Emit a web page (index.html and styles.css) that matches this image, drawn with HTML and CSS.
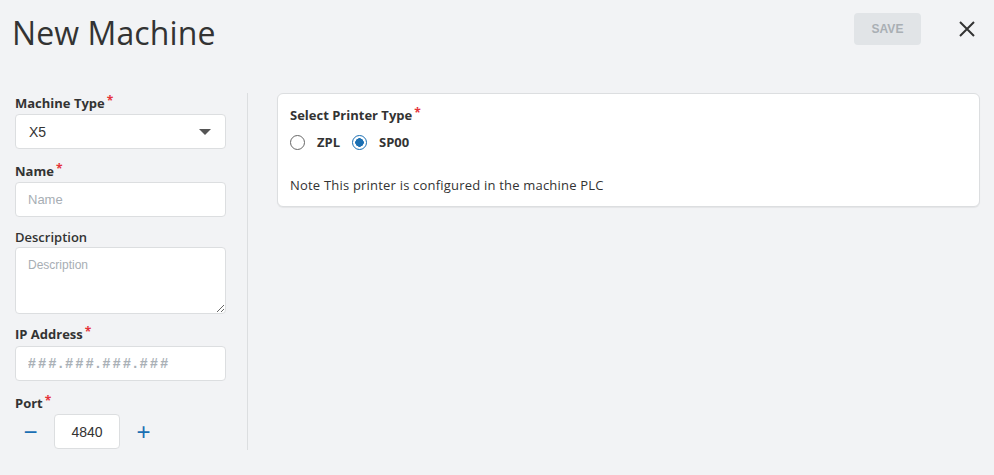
FILE: index.html
```html
<!DOCTYPE html>
<html lang="en">
<head>
  <meta charset="UTF-8" />
  <title>New Machine</title>
  <link rel="stylesheet" href="styles.css">
</head>
<body>
  <header class="top">
    <h1>New Machine</h1>
    <div class="actions">
      <button class="btn-save" disabled>SAVE</button>
      <button class="btn-close" aria-label="Close">
        <svg width="18" height="18" viewBox="0 0 18 18"><path d="M2 2L16 16M16 2L2 16" stroke="#333" stroke-width="2" fill="none"/></svg>
      </button>
    </div>
  </header>

  <div class="content">
    <div class="form-col">
      <label class="field-label">Machine Type<span class="req">*</span></label>
      <div class="select">
        <span>X5</span>
        <span class="caret"></span>
      </div>

      <label class="field-label">Name<span class="req">*</span></label>
      <input class="input" type="text" placeholder="Name">

      <label class="field-label label-tight">Description</label>
      <textarea class="input textarea" placeholder="Description"></textarea>

      <label class="field-label label-loose">IP Address<span class="req">*</span></label>
      <input class="input ip" type="text" placeholder="###.###.###.###">

      <label class="field-label">Port<span class="req">*</span></label>
      <div class="stepper">
        <button class="step-btn">&minus;</button>
        <input class="input port" type="text" value="4840">
        <button class="step-btn">+</button>
      </div>
    </div>

    <div class="main-col">
      <div class="card">
        <div class="field-label">Select Printer Type<span class="req">*</span></div>
        <div class="radios">
          <label class="radio"><span class="dot"></span>ZPL</label>
          <label class="radio"><span class="dot checked"></span>SP00</label>
        </div>
        <p class="note">Note This printer is configured in the machine PLC</p>
      </div>
    </div>
  </div>
</body>
</html>
```

FILE: styles.css
```css
body {
  margin: 0;
  background: #f2f3f5;
  font-family: "Open Sans", "Noto Sans", sans-serif;
  color: #333;
}
.top {
  display: flex;
  justify-content: space-between;
  align-items: flex-start;
  padding: 0 18px 0 12px;
  height: 93px;
}
.top h1 {
  margin: 11px 0 0;
  font-size: 32px;
  font-weight: 500;
  letter-spacing: 0.1px;
  color: #333;
}
.actions {
  display: flex;
  align-items: center;
  gap: 37px;
  margin-top: 13px;
}
.btn-save {
  width: 67px;
  height: 32px;
  border: none;
  border-radius: 4px;
  background: #e1e4e7;
  color: #a9afb4;
  font-family: "Liberation Sans", sans-serif;
  font-weight: 700;
  font-size: 12px;
}
.btn-close {
  background: none;
  border: none;
  padding: 0;
  width: 18px;
  height: 18px;
  display: flex;
}
.content {
  display: flex;
  padding-left: 15px;
}
.form-col {
  width: 211px;
  padding-right: 21px;
  border-right: 1px solid #dcdee0;
  display: flex;
  flex-direction: column;
  height: 357px;
}
.field-label {
  font-size: 13px;
  font-weight: 700;
  color: #333;
  height: 16px;
  line-height: 16px;
  margin-bottom: 5px;
}
.label-tight {
  margin-bottom: 2px;
  font-weight: 600;
}
.label-loose {
  margin-bottom: 6px;
}
.req {
  color: #e5333a;
  font-size: 12px;
  margin-left: 2px;
  vertical-align: 3px;
}
.select, .input {
  box-sizing: border-box;
  width: 211px;
  height: 35px;
  background: #fff;
  border: 1px solid #dcdee0;
  border-radius: 4px;
  margin-bottom: 12px;
}
.select {
  display: flex;
  align-items: center;
  justify-content: space-between;
  padding: 0 14px 0 13px;
  font-family: "Liberation Sans", sans-serif;
  font-size: 14px;
}
.caret {
  width: 0;
  height: 0;
  border-left: 6px solid transparent;
  border-right: 6px solid transparent;
  border-top: 6px solid #555;
}
.input {
  padding: 0 12px;
  font-family: "Liberation Sans", sans-serif;
  font-size: 13px;
  color: #333;
}
.input::placeholder {
  color: #a7aeb4;
}
.textarea {
  height: 67px;
  padding-top: 10px;
  margin-bottom: 10px;
  resize: vertical;
  font-size: 12px;
}
.ip::placeholder {
  font-size: 14px;
  letter-spacing: 2.5px;
  font-weight: 700;
  color: #a9b0b6;
}
.stepper {
  display: flex;
  align-items: center;
  gap: 8px;
}
.step-btn {
  background: none;
  border: none;
  color: #1a6fb3;
  font-size: 24px;
  width: 31px;
  padding: 0;
  line-height: 1;
}
.port {
  width: 66px;
  margin: 0;
  text-align: center;
  font-size: 14px;
}
.main-col {
  flex: 1;
  padding: 0 14px 0 29px;
}
.card {
  background: #fff;
  border: 1px solid #dcdee0;
  border-radius: 6px;
  box-shadow: 0 1px 1px rgba(0,0,0,0.06);
  padding: 11px 12px 12px;
}
.radios {
  display: flex;
  gap: 12px;
  height: 20px;
  margin-top: 11px;
}
.radio {
  display: flex;
  align-items: center;
  gap: 7px;
  font-size: 13px;
  font-weight: 700;
}
.dot {
  box-sizing: border-box;
  width: 15px;
  height: 15px;
  border: 1px solid #666;
  border-radius: 50%;
  margin-right: 5px;
}
.dot.checked {
  border: 1.5px solid #1a6fb3;
  background: radial-gradient(circle, #1a6fb3 0 4px, #fff 4.5px);
}
.note {
  margin: 24px 0 0;
  font-size: 13px;
  line-height: 18px;
  letter-spacing: 0.2px;
}
```
